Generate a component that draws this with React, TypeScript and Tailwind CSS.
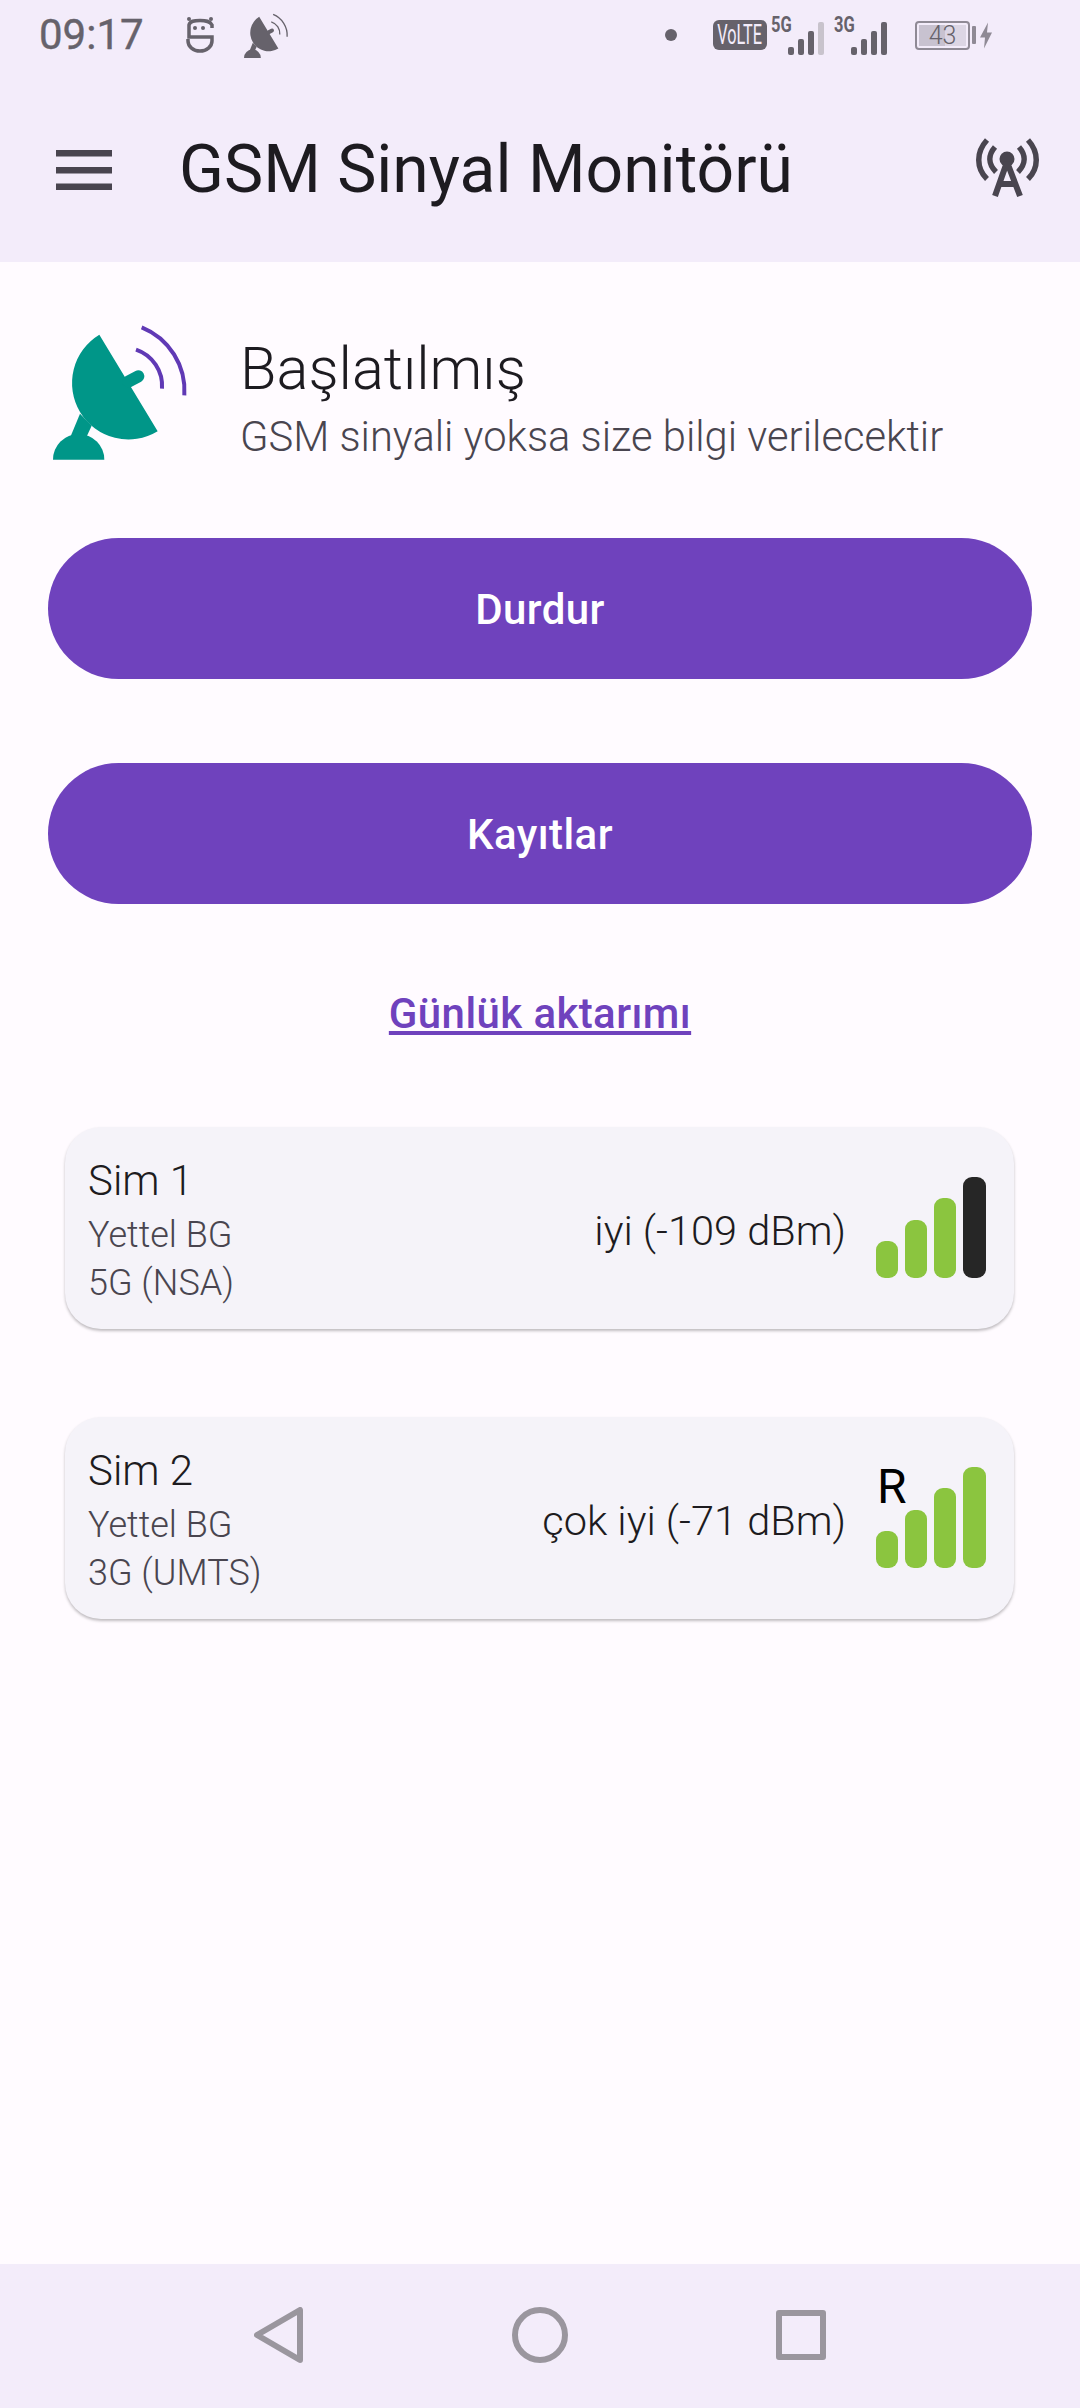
function StatusFace() {
  return (
    <svg width="28" height="36" viewBox="0 0 28 36" fill="none" stroke="#66626b" strokeWidth="3.5">
      <path d="M26 11V8C24 4 20 3.500 14 3.500C8 3.500 4 4 3 8V20H26V24A12 10 0 0 1 2 24V22" />
      <circle cx="3" cy="2" r="2" fill="#66626b" stroke="none" />
      <circle cx="25" cy="2" r="2" fill="#66626b" stroke="none" />
      <circle cx="9" cy="11" r="2" fill="#66626b" stroke="none" />
      <circle cx="17" cy="11" r="2" fill="#66626b" stroke="none" />
    </svg>
  )
}

function Dish({ fill, wave, strokeWidth = 12 }: { fill: string; wave: string; strokeWidth?: number }) {
  return (
    <svg viewBox="150 100 420 420" className="h-full w-full">
      <path d="M298 135L473 425A169 169 0 0 1 298 135Z" fill={fill} />
      <path d="M385 276L415 260" stroke={fill} strokeWidth="36" strokeLinecap="round" />
      <path d="M240 372L275 408L258 445L212 440Z" fill={fill} />
      <path d="M159 510A77 77 0 0 1 313 510Z" fill={fill} />
      <path d="M425 113A205 205 0 0 1 553 317" fill="none" stroke={wave} strokeWidth={strokeWidth} />
      <path d="M408 180A115 115 0 0 1 486 297" fill="none" stroke={wave} strokeWidth={strokeWidth} />
    </svg>
  )
}

function StatusSignal({ label, off }: { label: string; off?: boolean }) {
  return (
    <div className="relative h-[42px] w-[54px] shrink-0">
      <span className="absolute top-0 left-0 origin-left scale-x-[0.75] text-[22px] leading-none font-bold text-[#66626b]">
        {label}
      </span>
      <svg width="54" height="42" viewBox="0 0 54 42">
        <rect x="17" y="33" width="6" height="8" rx="2" fill="#66626b" />
        <rect x="27" y="25" width="6" height="16" rx="2" fill="#66626b" />
        <rect x="37" y="17" width="6" height="24" rx="2" fill="#66626b" />
        <rect x="47" y="8" width="6" height="33" rx="2" fill={off ? "#c8c3cc" : "#66626b"} />
      </svg>
    </div>
  )
}

function StatusBar() {
  return (
    <div className="flex h-[70px] items-center pl-[39px] text-[#66626b]">
      <span className="w-[147px] shrink-0 text-[42px] leading-none font-normal [-webkit-text-stroke:0.4px_#66626b]">09:17</span>
      <StatusFace />
      <div className="mt-[2px] ml-[29px] h-[46px] w-[46px] shrink-0">
        <Dish fill="#66626b" wave="#66626b" strokeWidth={12} />
      </div>
      <span className="ml-[376px] h-3 w-3 shrink-0 rounded-full bg-[#66626b]" />
      <div className="ml-[36px] flex h-[30px] w-[54px] shrink-0 items-center justify-center rounded-[6px] bg-[#66626b]">
        <span className="shrink-0 scale-x-[0.58] text-[28px] leading-none text-[#f3ecfa]">VoLTE</span>
      </div>
      <div className="ml-[4px]">
        <StatusSignal label="5G" off />
      </div>
      <div className="ml-[9px]">
        <StatusSignal label="3G" />
      </div>
      <div className="ml-[27px] flex h-[29px] w-[55px] shrink-0 items-center justify-center rounded-[4px] border-[2.5px] border-[#8f8a95] bg-[linear-gradient(90deg,#c8c2d0_55%,#dcd6e4_55%)] bg-clip-content p-[2px] text-[25px] leading-none font-light text-[#66626b]">
        43
      </div>
      <span className="ml-[2px] h-[18px] w-[4px] shrink-0 rounded-[1px] bg-[#8f8a95]" />
      <svg width="12" height="27" viewBox="0 0 12 26" className="ml-[4px] shrink-0">
        <path d="M8 0L0 15h5L4 26l8-16H7z" fill="#8f8a95" />
      </svg>
    </div>
  )
}

function AntennaIcon() {
  return (
    <svg width="64" height="60" viewBox="0 0 64 60" fill="none" stroke="#49454f" strokeWidth="5.500" className="mb-[4px] shrink-0">
      <path d="M11 2C0 14 0 30 11 41M52 2C63 14 63 30 52 41" />
      <path d="M19 9C12 17 12 26 20 34M43 9C50 17 50 26 42 34" />
      <circle cx="31" cy="21" r="7.500" fill="#49454f" stroke="none" />
      <path d="M31 24L19 58M31 24L44 58M23 46H40" strokeWidth="6" />
    </svg>
  )
}

function SignalBars({ level, roaming }: { level: "weak" | "full"; roaming?: boolean }) {
  return (
    <div className="relative h-[102px] w-[110px] shrink-0">
      <svg width="110" height="102" viewBox="0 0 110 102">
        <rect x="0" y="64" width="22" height="37" rx="9" fill="#8bc53f" />
        <rect x="29" y="43" width="22" height="58" rx="9" fill="#8bc53f" />
        <rect x="58" y="21" width="22" height="80" rx="9" fill="#8bc53f" />
        <rect x="87" y="0" width="23" height="101" rx="9" fill={level === "weak" ? "#262626" : "#8bc53f"} />
      </svg>
      {roaming && <span className="absolute top-[-4px] left-[1px] text-[48px] leading-none text-black">R</span>}
    </div>
  )
}

function SimCard(props: {
  name: string
  operator: string
  network: string
  quality: string
  level: "weak" | "full"
  roaming?: boolean
}) {
  return (
    <div className="ml-[17px] flex h-[202px] w-[949px] items-center rounded-[36px] bg-[#f5f3f9] pr-[28px] pl-[23px] shadow-[0_2px_3px_rgba(0,0,0,0.25)]">
      <div className="mt-[6px] flex flex-1 flex-col font-light">
        <span className="text-[42px] leading-[52px] text-[#1d1b20]">{props.name}</span>
        <span className="mt-[4px] text-[36px] leading-[48px] text-[#49454f]">{props.operator}</span>
        <span className="text-[36px] leading-[48px] text-[#49454f]">{props.network}</span>
      </div>
      <span className="mt-[6px] mr-[30px] text-[41.5px] leading-none font-light text-[#1d1b20]">{props.quality}</span>
      <SignalBars level={props.level} roaming={props.roaming} />
    </div>
  )
}

export default function App() {
  return (
    <div className="flex h-[2408px] w-[1080px] flex-col overflow-hidden bg-[#fffbff] font-['Roboto',sans-serif]">
      {/* Top app bar */}
      <div className="h-[262px] shrink-0 bg-[#f3ecfa]">
        <StatusBar />
        <div className="flex h-[192px] items-center pt-[8px] pr-[40px] pl-[56px]">
          <svg width="56" height="40" viewBox="0 0 56 40" fill="#49454f" className="shrink-0">
            <rect y="0" width="56" height="6.500" />
            <rect y="17" width="56" height="6.500" />
            <rect y="33.500" width="56" height="6.500" />
          </svg>
          <h1 className="ml-[67px] flex-1 text-[66px] leading-none font-normal text-[#1d1b20]">GSM Sinyal Monitörü</h1>
          <AntennaIcon />
        </div>
      </div>

      <div className="flex flex-1 flex-col px-[48px] pt-[61px]">
        <div className="flex h-[142px] items-start pl-[2px]">
          <div className="h-[140px] w-[140px] shrink-0">
            <Dish fill="#009688" wave="#6039b5" />
          </div>
          <div className="ml-[50px] flex flex-col font-light">
            <span className="mt-[8px] text-[59.5px] leading-[76px] text-[#1d1b20]">Başlatılmış</span>
            <span className="mt-[4px] text-[41.7px] leading-[52px] text-[#49454f]">GSM sinyali yoksa size bilgi verilecektir</span>
          </div>
        </div>

        <button className="mt-[73px] h-[141px] rounded-full bg-[#6f42bd] pt-[2px] text-[42px] font-medium tracking-[0.4px] text-white">Durdur</button>
        <button className="mt-[84px] h-[141px] rounded-full bg-[#6f42bd] pt-[2px] text-[42px] font-medium tracking-[0.4px] text-white">Kayıtlar</button>

        <a className="mt-[85px] text-center text-[42px] leading-[50px] font-medium tracking-[0.4px] text-[#6f42bd] underline">Günlük aktarımı</a>

        <div className="mt-[88px] flex flex-col gap-[88px]">
          <SimCard name="Sim 1" operator="Yettel BG" network="5G (NSA)" quality="iyi (-109 dBm)" level="weak" />
          <SimCard name="Sim 2" operator="Yettel BG" network="3G (UMTS)" quality="çok iyi (-71 dBm)" level="full" roaming />
        </div>
      </div>

      {/* Android nav bar */}
      <div className="flex h-[144px] shrink-0 items-center justify-center gap-[208px] bg-[#f3ecfa] pb-[2px]">
        <svg width="50" height="56" viewBox="0 0 50 56" fill="none" stroke="#9a969e" strokeWidth="6" strokeLinejoin="round">
          <path d="M46 3V53L3 28Z" />
        </svg>
        <svg width="56" height="56" viewBox="0 0 56 56" fill="none" stroke="#9a969e" strokeWidth="6">
          <circle cx="28" cy="28" r="25" />
        </svg>
        <svg width="50" height="50" viewBox="0 0 50 50" fill="none" stroke="#9a969e" strokeWidth="6" strokeLinejoin="round">
          <rect x="3" y="3" width="44" height="44" />
        </svg>
      </div>
    </div>
  )
}
